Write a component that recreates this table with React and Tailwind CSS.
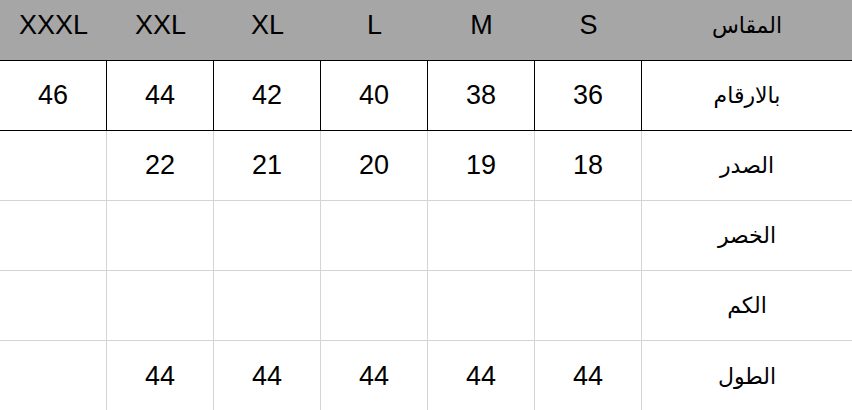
const sizes = ["XXXL", "XXL", "XL", "L", "M", "S"];

const rows = [
  { label: "بالارقام", values: ["46", "44", "42", "40", "38", "36"], strong: true },
  { label: "الصدر", values: ["", "22", "21", "20", "19", "18"] },
  { label: "الخصر", values: ["", "", "", "", "", ""] },
  { label: "الكم", values: ["", "", "", "", "", ""] },
  { label: "الطول", values: ["", "44", "44", "44", "44", "44"], last: true },
];

const font = { fontFamily: '"Liberation Sans", Arial, "DejaVu Sans", sans-serif' };

export default function App() {
  return (
    <div className="w-[852px] h-[410px] overflow-hidden bg-white text-black" style={font}>
      <div className="flex h-[61px] bg-[#a6a6a6] border-b border-black">
        {sizes.map((s) => (
          <div key={s} className="w-[107px] flex items-center justify-center pb-[9px] text-[27px]">
            {s}
          </div>
        ))}
        <div className="flex-1 flex items-center justify-center pb-[9px] text-[22px]" dir="rtl">
          المقاس
        </div>
      </div>

      {rows.map((r) => (
        <div
          key={r.label}
          className={
            "flex h-[70px] " +
            (r.last ? "" : r.strong ? "border-b border-black" : "border-b border-[#d4d4d4]")
          }
        >
          {r.values.map((v, i) => (
            <div
              key={i}
              className={
                "w-[107px] flex items-center justify-center text-[27px] border-r " +
                (r.strong ? "border-black" : "border-[#d4d4d4]")
              }
            >
              {v}
            </div>
          ))}
          <div className="flex-1 flex items-center justify-center text-[22px]" dir="rtl">
            {r.label}
          </div>
        </div>
      ))}
    </div>
  );
}
